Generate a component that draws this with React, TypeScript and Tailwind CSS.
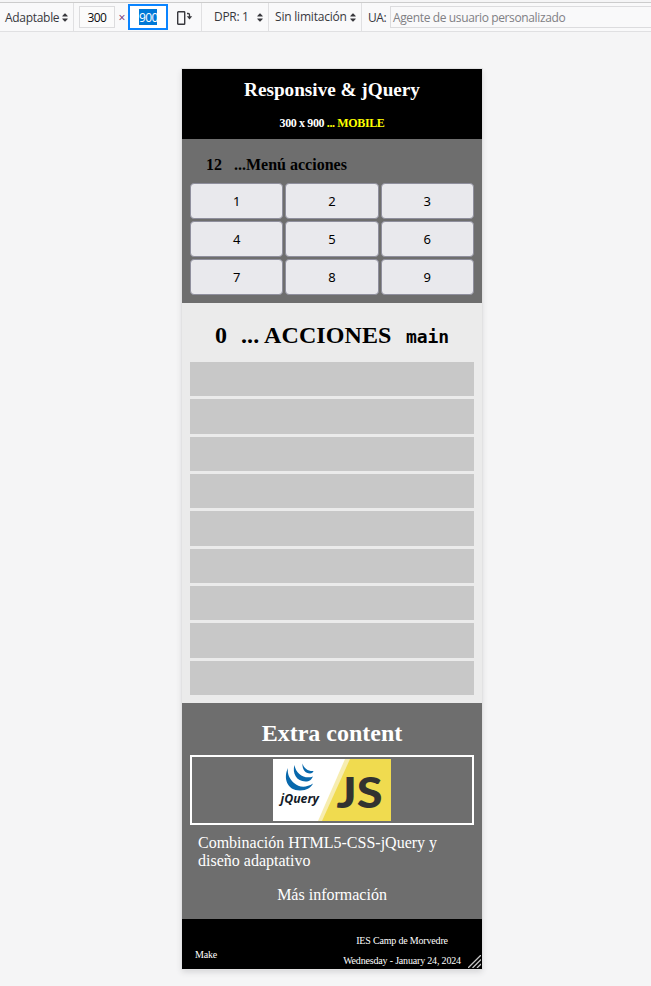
import React from "react";

const SERIF = "font-['Liberation_Serif','Times_New_Roman',serif]";

function Sorter() {
  return (
    <svg width="6" height="9" viewBox="0 0 6 9" className="block shrink-0 fill-[#38383d]">
      <path d="M2.6.4h.8L5.7 3v.6H.3V3zM.3 5.4h5.4V6L3.4 8.6h-.8L.3 6z" />
    </svg>
  );
}

function Toolbar() {
  return (
    <div className="flex h-8 w-[651px] items-stretch overflow-hidden whitespace-nowrap border-b border-[#e0e0e2] bg-[#f9f9fa] pt-[3px] font-['Open_Sans','Noto_Sans',sans-serif] text-[12px] leading-[28px] text-[#38383d] shadow-[inset_0_2px_0_#f5f5f6,inset_0_3px_0_#cccccc]">
      <div className="flex w-[74px] shrink-0 items-center border-r border-[#e0e0e2] pl-[5px]">
        <span className="w-[57px] pt-px tracking-[-0.3px]">Adaptable</span>
        <Sorter />
      </div>
      <div className="flex w-[128px] shrink-0 items-center border-r border-[#e0e0e2]">
        <div className="ml-[5px] h-[22px] w-9 border border-[#dcdcde] bg-[#fbfbfb] text-center leading-[21px] tracking-[-0.6px] text-[#0c0c0d]">
          300
        </div>
        <span className="w-[13px] pl-px pt-[2px] text-center text-[#6d2a6d]">×</span>
        <div className="flex h-[26px] w-10 items-center justify-center border-2 border-[#0a84ff] bg-white">
          <span className="h-4 w-[18px] bg-[#0078d7] text-center leading-[17px] tracking-[-0.6px] text-white">900</span>
        </div>
        <svg width="16" height="14" viewBox="0 0 16 14" className="ml-[9px] mt-[2px] block fill-none stroke-[#38383d]">
          <rect x="0.7" y="0.7" width="7" height="12.6" rx="0.6" strokeWidth="1.4" />
          <path d="M10 2.5h1.2q1.3 0 1.3 1.3V6" strokeWidth="1.3" />
          <path d="M9.8 5.2h5.4L12.5 8.4z" stroke="none" fill="#38383d" />
        </svg>
      </div>
      <div className="flex w-[67px] shrink-0 items-center border-r border-[#e0e0e2] pl-[12px]">
        <span className="w-[43px] tracking-[-0.3px]">DPR: 1</span>
        <Sorter />
      </div>
      <div className="flex w-[93px] shrink-0 items-center border-r border-[#e0e0e2] pl-[6px]">
        <span className="w-[75px] tracking-[-0.2px]">Sin limitación</span>
        <Sorter />
      </div>
      <span className="w-[28px] shrink-0 pl-[6px] pt-px tracking-[-0.4px]">UA:</span>
      <div className="mt-[3px] h-[22px] w-[270px] shrink-0 border border-[#dcdcde] pl-[2px] leading-[22px] tracking-[-0.37px] text-[#808084]">
        Agente de usuario personalizado
      </div>
    </div>
  );
}

function Logo() {
  return (
    <svg width="118" height="62" viewBox="0 0 118 62" className="block">
      <path fill="#fff" d="M0 0h118v62H0z" />
      <path fill="#f7edb0" d="M72 0h46v62H45z" />
      <path fill="#f0db4f" d="M77 0h41v62H49z" />
      <g fill="#0868ac">
        <path d="M15 9c-5 10-1 22.500 12 22.500 7 0 11-3 13-7-7 4.500-14 4-19-.5-4.500-4-7-9-6-15z" />
        <path d="M21.500 6c-2.500 8 2 16.500 11 16.500 4 0 6-2 7.500-5-8 3-17-2-18.500-11.500z" />
        <path d="M29.500 4.500c-.5 6 3 10 7.500 10 2 0 3-1 3.500-2.500-5 .5-9.500-2.500-11-7.500z" />
      </g>
      <text x="7.5" y="44" textLength="38.5" lengthAdjust="spacingAndGlyphs" className="fill-[#131b28] font-['Open_Sans',sans-serif] text-[12px] font-bold italic">jQuery</text>
      <text x="63.5" y="48.5" textLength="46" lengthAdjust="spacingAndGlyphs" className="fill-[#323330] font-['Lato',sans-serif] text-[42px] font-black">JS</text>
    </svg>
  );
}

export default function App() {
  return (
    <div className="h-[986px] w-[651px] overflow-hidden bg-[#f5f5f6]">
      <Toolbar />
      <div className={`relative ml-[182px] mt-[37px] flex h-[900px] w-[300px] flex-col whitespace-nowrap shadow-[0_0_0_1px_#e2e2e3,0_3px_6px_#d4d4d6] ${SERIF}`}>
        <header className="h-[70px] bg-black text-center font-bold text-white">
          <h1 className="pt-[10px] text-[19.2px] leading-[22px]">Responsive &amp; jQuery</h1>
          <p className="mt-[15px] text-[12px] leading-[14px] tracking-[-0.37px]">
            300 x 900 <span className="text-[#ffff00]">... MOBILE</span>
          </p>
        </header>

        <nav className="h-[164px] bg-[#6e6e6e] px-2 pt-[17px]">
          <h2 className="flex pl-4 text-[16px] font-bold leading-[18px] text-black">
            <span className="w-7">12</span>
            <span>...Menú acciones</span>
          </h2>
          <div className="mt-[9px] grid grid-cols-3 gap-[2px]">
            {[1, 2, 3, 4, 5, 6, 7, 8, 9].map((n) => (
              <button key={n} className="h-9 rounded-[4px] border border-[#8f8f9d] bg-[#e9e9ed] font-['Noto_Sans','Open_Sans',sans-serif] text-[13px] leading-[34px] text-black">
                {n}
              </button>
            ))}
          </div>
        </nav>

        <main className="h-[400px] bg-[#ebebeb] px-2 pt-[18px]">
          <h2 className="flex h-[28px] items-baseline pl-[25px] text-[24px] font-bold leading-[28px] text-black">
            <span className="w-[26px]">0</span>
            <span className="w-[165px] tracking-[0.1px]">... ACCIONES</span>
            <code className="font-['DejaVu_Sans_Mono',monospace] text-[18px] tracking-[-0.1px]">main</code>
          </h2>
          <div className="mt-[13px] grid h-[333px] grid-rows-9 gap-[3px]">
            {Array.from({ length: 9 }, (_, i) => (
              <div key={i} className="bg-[#c8c8c8]" />
            ))}
          </div>
        </main>

        <aside className="h-[216px] bg-[#6e6e6e] px-2 pt-4 text-white">
          <h2 className="text-center text-[24px] font-bold leading-[28px]">Extra content</h2>
          <div className="mt-2 flex h-[70px] justify-center border-2 border-white pt-[2px]">
            <Logo />
          </div>
          <p className="px-2 pt-[9px] text-[16px] leading-[18px]">
            Combinación HTML5-CSS-jQuery y<br />
            diseño adaptativo
          </p>
          <p className="mt-4 text-center text-[16px] leading-[18px]">Más información</p>
        </aside>

        <footer className="flex h-[50px] bg-black text-[10px] text-white">
          <span className="w-[140px] pl-[13px] pt-[30px] leading-[12px] tracking-[-0.2px]">Make</span>
          <div className="w-[160px] pt-[12px] text-center leading-[20px] tracking-[-0.18px]">
            <p>IES Camp de Morvedre</p>
            <p>Wednesday - January 24, 2024</p>
          </div>
        </footer>
        <svg width="13" height="13" viewBox="0 0 13 13" className="absolute bottom-px right-px fill-none stroke-[#c4c4c4]">
          <path d="M0 13 13 0M4.5 13 13 4.5M9 13l4-4" strokeWidth="1.3" />
        </svg>
      </div>
    </div>
  );
}
